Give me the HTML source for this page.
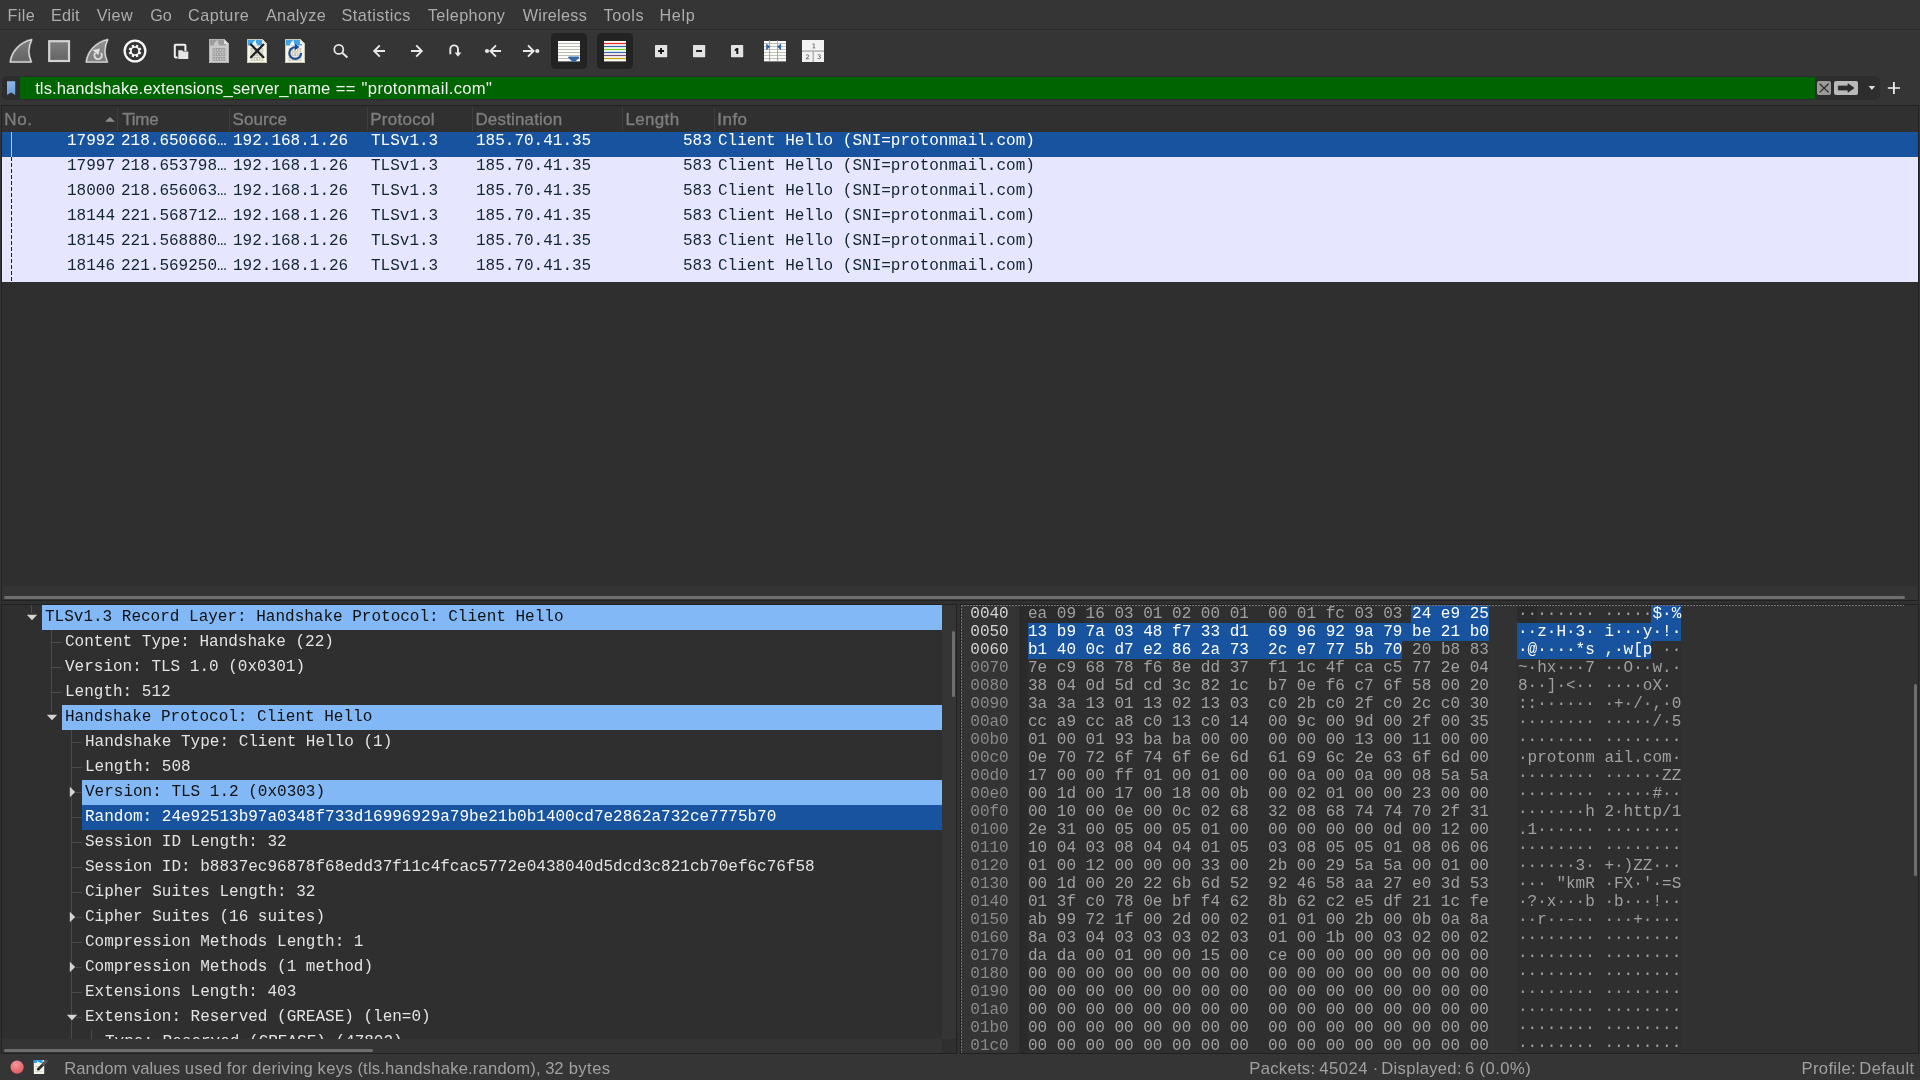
<!DOCTYPE html>
<html>
<head>
<meta charset="utf-8">
<title>Wireshark</title>
<style>
*{box-sizing:border-box;margin:0;padding:0}
html,body{width:1920px;height:1080px;overflow:hidden;background:#353535}
body{position:relative;will-change:transform;font-family:"Liberation Sans",sans-serif;color:#bdbdbd}
.abs{position:absolute}
/* menu */
#menu{position:absolute;left:0;top:0;width:1920px;height:30px;border-bottom:1px solid #2b2b2b}
#menu span{position:absolute;top:5px;font-size:16.2px;line-height:20px;color:#adadad;white-space:nowrap}
/* toolbar */
#tb{position:absolute;left:0;top:31px;width:1920px;height:41px}
#tb svg{position:absolute;overflow:visible}
/* filter */
#fwrap{position:absolute;left:2px;top:76px;width:1878px;height:24px;background:#2d2d2d;border-radius:5px}
#fgreen{position:absolute;left:20px;top:77px;width:1795px;height:22px;background:#006400}
#ftext{position:absolute;left:0;top:79px;width:1px;height:20px}
#ftext span{position:absolute;top:0;font-size:16.6px;line-height:20px;color:#f2f2f2;white-space:nowrap}
/* packet list */
#plist{position:absolute;left:1px;top:105px;width:1918px;height:496px;background:#2f2f2f;border:1px solid #222}
#phead{position:absolute;left:0;top:0;width:1916px;height:26px;background:#303030}
#phead span{position:absolute;top:4px;font-size:17px;line-height:20px;color:#7e7e7e;white-space:nowrap;-webkit-text-stroke:0.35px #7e7e7e}
#phead i{position:absolute;top:1px;width:1px;height:24px;background:#3d3d3d}
.prow{position:absolute;left:0;width:1916px;height:25px;background:#e7e6ff;color:#12272e;font-family:"Liberation Mono",monospace;font-size:16px;line-height:18px;white-space:pre}
.prow.sel{background:#17539f;color:#fff}
.prow span{position:absolute;top:0}
/* panes */
.mono{font-family:"Liberation Mono",monospace;font-size:16px;white-space:pre}
#tree{position:absolute;left:1px;top:604px;width:956px;height:450px;background:#2f2f2f;border:1px solid #222;overflow:hidden}
.tr{position:absolute;left:0;height:25px;width:940px;font-family:"Liberation Mono",monospace;font-size:16px;line-height:18px;color:#e3e3e3;white-space:pre}
.tr b{position:absolute;top:0;right:0;height:25px;font-weight:normal}
.tr span{position:absolute;top:3px}
.tr.l1 b{left:40px}.tr.l1 span{left:43px}
.tr.l2 b{left:60px}.tr.l2 span{left:63px}
.tr.l3 b{left:80px}.tr.l3 span{left:83px}
.tr.l4 b{left:100px}.tr.l4 span{left:103px}
.tr.lt b{background:#82b8f6}.tr.lt span{color:#111}
.tr.sel b{background:#17539f}.tr.sel span{color:#fff}
#treeclip{position:absolute;left:0;top:0;width:940px;height:434px;overflow:hidden}
.tl{position:absolute;background:#4a4a4a}
.ar{position:absolute}
.trk{position:absolute}
.sb{position:absolute;background:#6e6e6e;border-radius:2px}
#hex{position:absolute;left:960px;top:604px;width:959px;height:450px;background:#313131;border:1px solid #222;overflow:hidden}
.band{position:absolute}
.hs{position:absolute;background:#17539f}
#hexrows{position:absolute;left:0;top:0;width:957px;height:447px;overflow:hidden}
.hr{position:absolute;left:0;height:18px;width:957px;font-family:"Liberation Mono",monospace;font-size:16px;line-height:18px;white-space:pre;color:#a0a0a0}
.hr span{position:absolute;top:0}
.hr .off{left:9.3px;color:#8a8a8a}.hr .hx{left:67px}.hr .as{left:557px}
.hr.hl .off{color:#d2d2d2}
.hr em{font-style:normal;color:#fff}
#focus{position:absolute;left:0;top:0;width:943px;height:448px;background:
repeating-linear-gradient(to right,#757575 0,#757575 2px,transparent 2px,transparent 3px) left top/100% 1px no-repeat,
repeating-linear-gradient(to bottom,#757575 0,#757575 2px,transparent 2px,transparent 3px) left top/1px 100% no-repeat}
#status{position:absolute;left:0;top:1054px;width:1920px;height:26px}
#status span{position:absolute;top:5px;font-size:16.6px;line-height:20px;color:#a0a0a0;white-space:nowrap}
</style>
</head>
<body>
<div id="menu">
<span style="left:7.55px;letter-spacing:0.380px">File</span><span style="left:51.05px;letter-spacing:0.147px">Edit</span><span style="left:96.75px;letter-spacing:0.341px">View</span><span style="left:150.21px;letter-spacing:-0.133px">Go</span><span style="left:187.94px;letter-spacing:0.551px">Capture</span><span style="left:265.90px;letter-spacing:0.375px">Analyze</span><span style="left:341.50px;letter-spacing:0.465px">Statistics</span><span style="left:427.77px;letter-spacing:0.423px">Telephony</span><span style="left:522.71px;letter-spacing:0.285px">Wireless</span><span style="left:603.57px;letter-spacing:0.555px">Tools</span><span style="left:659.40px;letter-spacing:0.711px">Help</span>
</div>
<div id="tb">
<!--TOOLBAR-->
</div>
<div id="fwrap"></div>
<div id="fgreen"></div>
<div id="ftext"><span style="left:35.18px;letter-spacing:0.079px">tls.handshake.extensions_server_name</span><span style="left:335.77px;letter-spacing:0.230px">==</span><span style="left:361.62px;letter-spacing:0.340px">"protonmail.com"</span></div>
<svg id="icons" style="position:absolute;left:0;top:0" width="1920" height="104" viewBox="0 0 1920 104">
<defs><linearGradient id="gf" x1="0" y1="0" x2="0" y2="1"><stop offset="0" stop-color="#7e7e7e"/><stop offset="1" stop-color="#646464"/></linearGradient><linearGradient id="gf2" x1="0" y1="0" x2="0" y2="1"><stop offset="0" stop-color="#929292"/><stop offset="1" stop-color="#7c7c7c"/></linearGradient><linearGradient id="gb" x1="0" y1="0" x2="0" y2="1"><stop offset="0" stop-color="#8fb8ea"/><stop offset="1" stop-color="#6c9cd8"/></linearGradient></defs>
<path d="M10.4 61.9C11.5 52 19.5 42.5 31.6 39.7C28.2 46.5 28.2 55 31.2 61.9Z" fill="url(#gf)" stroke="#8a8a8a" stroke-width="2.3" stroke-linejoin="round"/><path d="M10.4 61.9C11.5 52 19.5 42.5 31.6 39.7C28.2 46.5 28.2 55 31.2 61.9Z" fill="none" stroke="#e2e2e2" stroke-width="1.05" stroke-linejoin="round"/>
<rect x="49.2" y="41.2" width="19.8" height="19.8" fill="url(#gf)" stroke="#d2d2d2" stroke-width="2.2"/>
<path d="M86.4 61.9C87.5 52 95.5 42.5 107.6 39.7C104.2 46.5 104.2 55 107.2 61.9Z" fill="url(#gf2)" stroke="#8a8a8a" stroke-width="2.3" stroke-linejoin="round"/><path d="M86.4 61.9C87.5 52 95.5 42.5 107.6 39.7C104.2 46.5 104.2 55 107.2 61.9Z" fill="none" stroke="#e2e2e2" stroke-width="1.05" stroke-linejoin="round"/>
<path d="M100.9 53A3.7 3.7 0 1 1 95.5 52.8" fill="none" stroke="#dedede" stroke-width="1.9"/><path d="M92.6 50L100 48.5L98.3 55Z" fill="#e2e2e2"/>
<circle cx="135" cy="51" r="10.35" fill="none" stroke="#f8f8f8" stroke-width="2.3"/>
<path d="M139.86 51.61 L141.34 52.42 L140.49 54.48 L138.87 54.00 L138.00 54.87 L138.48 56.49 L136.42 57.34 L135.61 55.86 L134.39 55.86 L133.58 57.34 L131.52 56.49 L132.00 54.87 L131.13 54.00 L129.51 54.48 L128.66 52.42 L130.14 51.61 L130.14 50.39 L128.66 49.58 L129.51 47.52 L131.13 48.00 L132.00 47.13 L131.52 45.51 L133.58 44.66 L134.39 46.14 L135.61 46.14 L136.42 44.66 L138.48 45.51 L138.00 47.13 L138.87 48.00 L140.49 47.52 L141.34 49.58 L139.86 50.39Z" fill="#f8f8f8"/><circle cx="135" cy="51" r="3.2" fill="#353535"/>
<rect x="174.8" y="44.8" width="10.6" height="12.6" rx="0.8" fill="none" stroke="#f0f0f0" stroke-width="2"/>
<path d="M178.3 50.3H182.2L183.5 51.6H188.3V59H178.3Z" fill="#e6e6e6" stroke="#353535" stroke-width="1.4" paint-order="stroke"/>
<path d="M209 39H224L229 44V63H209Z" fill="#cbcbcb"/><path d="M209 39H224L226 41V45.5H209Z" fill="#9d9d9d"/><path d="M213.6 45.5Q215 41.2 217.8 39.8Q217.2 43.2 219.8 45.5Z" fill="#cbcbcb"/><path d="M224 39L229 44H224Z" fill="#e4e4e4"/><rect x="213.0" y="48.3" width="2" height="3" fill="none" stroke="#909090" stroke-width="0.7"/><rect x="216.3" y="48.3" width="2" height="3" fill="none" stroke="#909090" stroke-width="0.7"/><rect x="219.6" y="48.3" width="2" height="3" fill="none" stroke="#909090" stroke-width="0.7"/><rect x="222.9" y="48.3" width="2" height="3" fill="none" stroke="#909090" stroke-width="0.7"/><rect x="213.0" y="52.9" width="2" height="3" fill="none" stroke="#909090" stroke-width="0.7"/><rect x="216.3" y="52.9" width="2" height="3" fill="none" stroke="#909090" stroke-width="0.7"/><rect x="219.6" y="52.9" width="2" height="3" fill="none" stroke="#909090" stroke-width="0.7"/><rect x="222.9" y="52.9" width="2" height="3" fill="none" stroke="#909090" stroke-width="0.7"/><rect x="213.0" y="57.5" width="2" height="3" fill="none" stroke="#909090" stroke-width="0.7"/><rect x="216.3" y="57.5" width="2" height="3" fill="none" stroke="#909090" stroke-width="0.7"/><rect x="219.6" y="57.5" width="2" height="3" fill="none" stroke="#909090" stroke-width="0.7"/><rect x="222.9" y="57.5" width="2" height="3" fill="none" stroke="#909090" stroke-width="0.7"/>
<path d="M209.5 39.5H224L228.5 44V62.5H209.5Z" fill="none" stroke="#b4b4b4" stroke-width="1"/>
<path d="M247 39H262L267 44V63H247Z" fill="#f7f7e8"/><path d="M247 39H262L264 41V45.5H247Z" fill="#43a3e6"/><path d="M251.6 45.5Q253 41.2 255.8 39.8Q255.2 43.2 257.8 45.5Z" fill="#f7f7e8"/><path d="M262 39L267 44H262Z" fill="#fdfdf4"/><rect x="251.0" y="48.3" width="2" height="3" fill="none" stroke="#b4b4a4" stroke-width="0.7"/><rect x="254.3" y="48.3" width="2" height="3" fill="none" stroke="#b4b4a4" stroke-width="0.7"/><rect x="257.6" y="48.3" width="2" height="3" fill="none" stroke="#b4b4a4" stroke-width="0.7"/><rect x="260.9" y="48.3" width="2" height="3" fill="none" stroke="#b4b4a4" stroke-width="0.7"/><rect x="251.0" y="52.9" width="2" height="3" fill="none" stroke="#b4b4a4" stroke-width="0.7"/><rect x="254.3" y="52.9" width="2" height="3" fill="none" stroke="#b4b4a4" stroke-width="0.7"/><rect x="257.6" y="52.9" width="2" height="3" fill="none" stroke="#b4b4a4" stroke-width="0.7"/><rect x="260.9" y="52.9" width="2" height="3" fill="none" stroke="#b4b4a4" stroke-width="0.7"/><rect x="251.0" y="57.5" width="2" height="3" fill="none" stroke="#b4b4a4" stroke-width="0.7"/><rect x="254.3" y="57.5" width="2" height="3" fill="none" stroke="#b4b4a4" stroke-width="0.7"/><rect x="257.6" y="57.5" width="2" height="3" fill="none" stroke="#b4b4a4" stroke-width="0.7"/><rect x="260.9" y="57.5" width="2" height="3" fill="none" stroke="#b4b4a4" stroke-width="0.7"/>
<path d="M247.5 39.5H262L266.5 44V62.5H247.5Z" fill="none" stroke="#c8c8b8" stroke-width="1"/>
<path d="M251 44.6L263.4 57.2M263.4 44.6L251 57.2" stroke="#1c2024" stroke-width="2.2" stroke-linecap="round"/>
<path d="M285 39H300L305 44V63H285Z" fill="#f7f7e8"/><path d="M285 39H300L302 41V45.5H285Z" fill="#43a3e6"/><path d="M289.6 45.5Q291 41.2 293.8 39.8Q293.2 43.2 295.8 45.5Z" fill="#f7f7e8"/><path d="M300 39L305 44H300Z" fill="#fdfdf4"/><rect x="289.0" y="48.3" width="2" height="3" fill="none" stroke="#b4b4a4" stroke-width="0.7"/><rect x="292.3" y="48.3" width="2" height="3" fill="none" stroke="#b4b4a4" stroke-width="0.7"/><rect x="295.6" y="48.3" width="2" height="3" fill="none" stroke="#b4b4a4" stroke-width="0.7"/><rect x="298.9" y="48.3" width="2" height="3" fill="none" stroke="#b4b4a4" stroke-width="0.7"/><rect x="289.0" y="52.9" width="2" height="3" fill="none" stroke="#b4b4a4" stroke-width="0.7"/><rect x="292.3" y="52.9" width="2" height="3" fill="none" stroke="#b4b4a4" stroke-width="0.7"/><rect x="295.6" y="52.9" width="2" height="3" fill="none" stroke="#b4b4a4" stroke-width="0.7"/><rect x="298.9" y="52.9" width="2" height="3" fill="none" stroke="#b4b4a4" stroke-width="0.7"/><rect x="289.0" y="57.5" width="2" height="3" fill="none" stroke="#b4b4a4" stroke-width="0.7"/><rect x="292.3" y="57.5" width="2" height="3" fill="none" stroke="#b4b4a4" stroke-width="0.7"/><rect x="295.6" y="57.5" width="2" height="3" fill="none" stroke="#b4b4a4" stroke-width="0.7"/><rect x="298.9" y="57.5" width="2" height="3" fill="none" stroke="#b4b4a4" stroke-width="0.7"/>
<path d="M285.5 39.5H300L304.5 44V62.5H285.5Z" fill="none" stroke="#c8c8b8" stroke-width="1"/>
<path d="M301.1 53.1A5.9 5.9 0 1 1 295.2 47.2" fill="none" stroke="#1b4b9c" stroke-width="2.1"/><path d="M294.8 43.8L299.4 47L294.8 50.2Z" fill="#1b4b9c"/>
<circle cx="338.8" cy="49.4" r="4.5" fill="none" stroke="#e8e8e8" stroke-width="1.7"/><path d="M342.2 52.8L347.4 57.6" stroke="#e8e8e8" stroke-width="2" stroke-linecap="butt"/>
<path d="M385 51H374.6M379.8 45.4L374.2 51L379.8 56.6" fill="none" stroke="#e8e8e8" stroke-width="1.9" stroke-linejoin="miter"/>
<path d="M411 51H421.4M416.2 45.4L421.8 51L416.2 56.6" fill="none" stroke="#e8e8e8" stroke-width="1.9" stroke-linejoin="miter"/>
<path d="M450.3 54.2V49.2A3.85 3.85 0 0 1 458 49.2V53" fill="none" stroke="#e8e8e8" stroke-width="1.9" stroke-linejoin="miter"/>
<path d="M454.6 52.6H461.4L458 56.8Z" fill="#e8e8e8"/>
<circle cx="487" cy="51" r="2.1" fill="#e8e8e8"/><path d="M501 51H491M496 45.4L490.4 51L496 56.6" fill="none" stroke="#e8e8e8" stroke-width="1.9" stroke-linejoin="miter"/>
<path d="M523 51H533M528 45.4L533.6 51L528 56.6" fill="none" stroke="#e8e8e8" stroke-width="1.9" stroke-linejoin="miter"/><circle cx="537.3" cy="51" r="2.1" fill="#e8e8e8"/>
<rect x="551" y="33" width="36" height="36" rx="4.5" fill="#232323"/><rect x="597" y="33" width="36" height="36" rx="4.5" fill="#232323"/>
<rect x="558" y="41" width="22" height="20.4" fill="#fbfbfb"/>
<path d="M558 43.5H580" stroke="#bdbdb0" stroke-width="1"/>
<path d="M558 46.5H580" stroke="#bdbdb0" stroke-width="1"/>
<path d="M558 49.5H580" stroke="#bdbdb0" stroke-width="1"/>
<path d="M558 52.5H580" stroke="#bdbdb0" stroke-width="1"/>
<path d="M558 55.5H580" stroke="#bdbdb0" stroke-width="1"/>
<path d="M558 58.5H580" stroke="#bdbdb0" stroke-width="1"/>
<path d="M569 56.6H578.4Q579.8 56.8 579 58L575.2 61.8Q574 62.8 572.6 61.8L568.4 58Q567.6 56.8 569 56.6Z" fill="#3566a6"/>
<rect x="604" y="41" width="22" height="20.4" fill="#ffffff"/>
<path d="M604 43.5H626" stroke="#ef2929" stroke-width="1.3"/>
<path d="M604 46.5H626" stroke="#3465a4" stroke-width="1.3"/>
<path d="M604 49.5H626" stroke="#73d216" stroke-width="1.3"/>
<path d="M604 52.5H626" stroke="#3465a4" stroke-width="1.3"/>
<path d="M604 55.5H626" stroke="#75507b" stroke-width="1.3"/>
<path d="M604 58.5H626" stroke="#c4a000" stroke-width="1.3"/>
<rect x="655" y="45" width="12.2" height="12.2" rx="0.6" fill="#e3e3e3"/>
<rect x="693" y="45" width="12.2" height="12.2" rx="0.6" fill="#e3e3e3"/>
<rect x="731" y="45" width="12.2" height="12.2" rx="0.6" fill="#e3e3e3"/>
<path d="M658.1 51H664M661.05 48V54" stroke="#151515" stroke-width="1.9"/>
<path d="M696.1 51H702" stroke="#151515" stroke-width="1.9"/>
<path d="M738.3 47.9V54.1H736.3V50.4L734.7 51.2V49.3L736.7 47.9Z" fill="#151515"/>
<rect x="764" y="41" width="22" height="20.4" fill="#fbfbfb"/>
<path d="M764 43.5H786" stroke="#c4c4b8" stroke-width="1"/>
<path d="M764 46.5H786" stroke="#c4c4b8" stroke-width="1"/>
<path d="M764 49.5H786" stroke="#c4c4b8" stroke-width="1"/>
<path d="M764 52.5H786" stroke="#c4c4b8" stroke-width="1"/>
<path d="M764 55.5H786" stroke="#c4c4b8" stroke-width="1"/>
<path d="M764 58.5H786" stroke="#c4c4b8" stroke-width="1"/>
<path d="M769.6 40V62M777.6 40V62" stroke="#9a9a8c" stroke-width="0.9"/>
<path d="M766.2 43.4L770.3 46.8L766.2 50.2Z M781.1 43.4L777 46.8L781.1 50.2Z" fill="#3566a6"/>
<rect x="802" y="40" width="22" height="22" fill="#a4a4a4"/>
<rect x="802" y="40" width="22" height="10.4" fill="#f2f2f2"/><rect x="802" y="51.7" width="10.6" height="10.3" fill="#f2f2f2"/><rect x="813.8" y="51.7" width="10.2" height="10.3" fill="#f2f2f2"/>
<path d="M812.6 44.5L814 43.6V47.9M812.6 47.9H815.2 M805.9 55.5Q807.4 54 808.7 55.3Q809.2 56.7 805.9 58.8H809.3 M817.7 55.1Q819.4 54 820.5 55.3Q820.5 56.5 819 56.6Q821 56.9 820.7 58Q819.4 59.3 817.5 58.3" fill="none" stroke="#606060" stroke-width="0.8"/>
<path d="M7 81.2H15.2V95L11.1 92.6L7 95Z" fill="url(#gb)"/>
<rect x="1817" y="81" width="14" height="14" rx="2" fill="#9a9a9a"/><path d="M1819.6 83.8L1828.6 92.4M1828.6 83.8L1819.6 92.4" stroke="#2c2c2c" stroke-width="1.3"/>
<rect x="1834" y="81" width="24" height="14" rx="2" fill="#b9b9b9"/><path d="M1838.3 86H1848V83.8L1854 88L1848 92.2V90H1838.3Z" fill="#2c2c2c" stroke="#2c2c2c" stroke-width="0.8" stroke-linejoin="round"/>
<path d="M1868.6 86H1875.2L1871.9 89.9Z" fill="#dcdcdc"/>
<path d="M1887.8 88H1900M1893.9 82V94" stroke="#f2f2f2" stroke-width="1.7"/>
</svg>
<div style="position:absolute;left:0;top:601px;width:1920px;height:453px;background:#303030"></div>
<div id="plist">
<div class="trk" style="left:0;top:480px;width:1916px;height:14px;background:#343434"></div>
<div id="phead">
<span style="left:2.24px;letter-spacing:0.632px">No.</span><svg style="position:absolute;left:102px;top:10px" width="12" height="7" viewBox="0 0 12 7"><path d="M1 5.7L6 0.9L11 5.7Z" fill="#8c8c8c"/></svg><i style="left:115px"></i>
<span style="left:120.35px;letter-spacing:-0.253px">Time</span><i style="left:227px"></i>
<span style="left:230.60px;letter-spacing:0.086px">Source</span><i style="left:365px"></i>
<span style="left:368.24px;letter-spacing:0.265px">Protocol</span><i style="left:470px"></i>
<span style="left:473.44px;letter-spacing:0.160px">Destination</span><i style="left:620px"></i>
<span style="left:623.44px;letter-spacing:0.339px">Length</span><i style="left:712px"></i>
<span style="left:715.30px;letter-spacing:0.459px">Info</span>
</div>
<div class="prow sel" style="top:26px"><span style="left:65px">17992</span><span style="left:119px">218.650666…</span><span style="left:231px">192.168.1.26</span><span style="left:369px">TLSv1.3</span><span style="left:474px">185.70.41.35</span><span style="left:681px">583</span><span style="left:716px">Client Hello (SNI=protonmail.com)</span></div>
<div class="prow" style="top:51px"><span style="left:65px">17997</span><span style="left:119px">218.653798…</span><span style="left:231px">192.168.1.26</span><span style="left:369px">TLSv1.3</span><span style="left:474px">185.70.41.35</span><span style="left:681px">583</span><span style="left:716px">Client Hello (SNI=protonmail.com)</span></div>
<div class="prow" style="top:76px"><span style="left:65px">18000</span><span style="left:119px">218.656063…</span><span style="left:231px">192.168.1.26</span><span style="left:369px">TLSv1.3</span><span style="left:474px">185.70.41.35</span><span style="left:681px">583</span><span style="left:716px">Client Hello (SNI=protonmail.com)</span></div>
<div class="prow" style="top:101px"><span style="left:65px">18144</span><span style="left:119px">221.568712…</span><span style="left:231px">192.168.1.26</span><span style="left:369px">TLSv1.3</span><span style="left:474px">185.70.41.35</span><span style="left:681px">583</span><span style="left:716px">Client Hello (SNI=protonmail.com)</span></div>
<div class="prow" style="top:126px"><span style="left:65px">18145</span><span style="left:119px">221.568880…</span><span style="left:231px">192.168.1.26</span><span style="left:369px">TLSv1.3</span><span style="left:474px">185.70.41.35</span><span style="left:681px">583</span><span style="left:716px">Client Hello (SNI=protonmail.com)</span></div>
<div class="prow" style="top:151px"><span style="left:65px">18146</span><span style="left:119px">221.569250…</span><span style="left:231px">192.168.1.26</span><span style="left:369px">TLSv1.3</span><span style="left:474px">185.70.41.35</span><span style="left:681px">583</span><span style="left:716px">Client Hello (SNI=protonmail.com)</span></div>
<div style="position:absolute;left:9px;top:26px;width:1px;height:25px;background:#c9c8b4"></div>
<div style="position:absolute;left:9px;top:51px;width:1px;height:125px;background:repeating-linear-gradient(to bottom,#1a1f24 0,#1a1f24 4px,transparent 4px,transparent 6px)"></div>
</div>
<div id="tree"><div id="treeclip">
<div class="tl" style="left:29px;top:-1px;width:1px;height:9px"></div>
<div class="tl" style="left:49px;top:25px;width:1px;height:82px"></div>
<div class="tl" style="left:69px;top:125px;width:1px;height:310px"></div>
<div class="tl" style="left:89px;top:425px;width:1px;height:10px"></div>
<div class="tr l1 lt" style="top:0px"><b></b><span>TLSv1.3 Record Layer: Handshake Protocol: Client Hello</span></div>
<svg class="ar" style="left:24px;top:9px" width="12" height="7" viewBox="0 0 12 7"><path d="M0.8 0.8H11.2L6 6.2Z" fill="#d4d4d4"/></svg>
<div class="tl" style="left:49px;top:37px;width:11px;height:1px"></div>
<div class="tr l2 " style="top:25px"><span>Content Type: Handshake (22)</span></div>
<div class="tl" style="left:49px;top:62px;width:11px;height:1px"></div>
<div class="tr l2 " style="top:50px"><span>Version: TLS 1.0 (0x0301)</span></div>
<div class="tl" style="left:49px;top:87px;width:11px;height:1px"></div>
<div class="tr l2 " style="top:75px"><span>Length: 512</span></div>
<div class="tr l2 lt" style="top:100px"><b></b><span>Handshake Protocol: Client Hello</span></div>
<svg class="ar" style="left:44px;top:109px" width="12" height="7" viewBox="0 0 12 7"><path d="M0.8 0.8H11.2L6 6.2Z" fill="#d4d4d4"/></svg>
<div class="tl" style="left:69px;top:137px;width:11px;height:1px"></div>
<div class="tr l3 " style="top:125px"><span>Handshake Type: Client Hello (1)</span></div>
<div class="tl" style="left:69px;top:162px;width:11px;height:1px"></div>
<div class="tr l3 " style="top:150px"><span>Length: 508</span></div>
<div class="tl" style="left:74px;top:187px;width:6px;height:1px"></div>
<div class="tr l3 lt" style="top:175px"><b></b><span>Version: TLS 1.2 (0x0303)</span></div>
<svg class="ar" style="left:67px;top:181px" width="7" height="12" viewBox="0 0 7 12"><path d="M0.8 0.8V11.2L6.2 6Z" fill="#d4d4d4"/></svg>
<div class="tl" style="left:69px;top:212px;width:11px;height:1px"></div>
<div class="tr l3 sel" style="top:200px"><b></b><span>Random: 24e92513b97a0348f733d16996929a79be21b0b1400cd7e2862a732ce7775b70</span></div>
<div class="tl" style="left:69px;top:237px;width:11px;height:1px"></div>
<div class="tr l3 " style="top:225px"><span>Session ID Length: 32</span></div>
<div class="tl" style="left:69px;top:262px;width:11px;height:1px"></div>
<div class="tr l3 " style="top:250px"><span>Session ID: b8837ec96878f68edd37f11c4fcac5772e0438040d5dcd3c821cb70ef6c76f58</span></div>
<div class="tl" style="left:69px;top:287px;width:11px;height:1px"></div>
<div class="tr l3 " style="top:275px"><span>Cipher Suites Length: 32</span></div>
<div class="tl" style="left:74px;top:312px;width:6px;height:1px"></div>
<div class="tr l3 " style="top:300px"><span>Cipher Suites (16 suites)</span></div>
<svg class="ar" style="left:67px;top:306px" width="7" height="12" viewBox="0 0 7 12"><path d="M0.8 0.8V11.2L6.2 6Z" fill="#d4d4d4"/></svg>
<div class="tl" style="left:69px;top:337px;width:11px;height:1px"></div>
<div class="tr l3 " style="top:325px"><span>Compression Methods Length: 1</span></div>
<div class="tl" style="left:74px;top:362px;width:6px;height:1px"></div>
<div class="tr l3 " style="top:350px"><span>Compression Methods (1 method)</span></div>
<svg class="ar" style="left:67px;top:356px" width="7" height="12" viewBox="0 0 7 12"><path d="M0.8 0.8V11.2L6.2 6Z" fill="#d4d4d4"/></svg>
<div class="tl" style="left:69px;top:387px;width:11px;height:1px"></div>
<div class="tr l3 " style="top:375px"><span>Extensions Length: 403</span></div>
<div class="tl" style="left:74px;top:412px;width:6px;height:1px"></div>
<div class="tr l3 " style="top:400px"><span>Extension: Reserved (GREASE) (len=0)</span></div>
<svg class="ar" style="left:64px;top:409px" width="12" height="7" viewBox="0 0 12 7"><path d="M0.8 0.8H11.2L6 6.2Z" fill="#d4d4d4"/></svg>
<div class="tl" style="left:89px;top:437px;width:11px;height:1px"></div>
<div class="tr l4 " style="top:425px"><span>Type: Reserved (GREASE) (47802)</span></div>
</div>
<div class="trk" style="left:940px;top:0;width:14px;height:434px;background:#353535"></div><div class="trk" style="left:0;top:434px;width:940px;height:14px;background:#343434"></div><div class="trk" style="left:940px;top:434px;width:14px;height:14px;background:#2f2f2f"></div><div class="sb" style="left:950px;top:26px;width:3px;height:66px"></div>
<div class="sb" style="left:2px;top:444px;width:369px;height:3px"></div>
</div>
<div id="hex">
<div class="band" style="left:0;top:0;width:58px;height:448px;background:#343434"></div>
<div class="band" style="left:58px;top:0;width:9px;height:448px;background:#2b2b2b"></div>
<div class="band" style="left:67px;top:0;width:461px;height:448px;background:#2f2f2f"></div>
<div class="band" style="left:528px;top:0;width:28px;height:448px;background:#323232"></div>
<div class="band" style="left:556px;top:0;width:164px;height:448px;background:#2f2f2f"></div>
<div class="band" style="left:720px;top:0;width:1237px;height:448px;background:#313131"></div>
<div class="band" style="left:67px;top:0;width:57px;height:18px;background:#2b2b2b"></div><div class="band" style="left:556px;top:0;width:20px;height:18px;background:#2b2b2b"></div><div class="hs" style="left:450px;top:0;width:78px;height:18px"></div>
<div class="hs" style="left:67px;top:18px;width:461px;height:18px"></div>
<div class="hs" style="left:67px;top:36px;width:374px;height:18px"></div>
<div class="hs" style="left:690px;top:0;width:30px;height:18px"></div>
<div class="hs" style="left:556px;top:18px;width:164px;height:18px"></div>
<div class="hs" style="left:556px;top:36px;width:134px;height:18px"></div>
<div id="hexrows">
<div class="hr hl" style="top:0px"><span class="off">0040</span><span class="hx">ea 09 16 03 01 02 00 01  00 01 fc 03 03 <em>24 e9 25</em></span><span class="as">········ ·····<em>$·%</em></span></div>
<div class="hr hl" style="top:18px"><span class="off">0050</span><span class="hx"><em>13 b9 7a 03 48 f7 33 d1  69 96 92 9a 79 be 21 b0</em></span><span class="as"><em>··z·H·3· i···y·!·</em></span></div>
<div class="hr hl" style="top:36px"><span class="off">0060</span><span class="hx"><em>b1 40 0c d7 e2 86 2a 73  2c e7 77 5b 70</em> 20 b8 83</span><span class="as"><em>·@····*s ,·w[p</em> ··</span></div>
<div class="hr " style="top:54px"><span class="off">0070</span><span class="hx">7e c9 68 78 f6 8e dd 37  f1 1c 4f ca c5 77 2e 04</span><span class="as">~·hx···7 ··O··w.·</span></div>
<div class="hr " style="top:72px"><span class="off">0080</span><span class="hx">38 04 0d 5d cd 3c 82 1c  b7 0e f6 c7 6f 58 00 20</span><span class="as">8··]·&lt;·· ····oX· </span></div>
<div class="hr " style="top:90px"><span class="off">0090</span><span class="hx">3a 3a 13 01 13 02 13 03  c0 2b c0 2f c0 2c c0 30</span><span class="as">::······ ·+·/·,·0</span></div>
<div class="hr " style="top:108px"><span class="off">00a0</span><span class="hx">cc a9 cc a8 c0 13 c0 14  00 9c 00 9d 00 2f 00 35</span><span class="as">········ ·····/·5</span></div>
<div class="hr " style="top:126px"><span class="off">00b0</span><span class="hx">01 00 01 93 ba ba 00 00  00 00 00 13 00 11 00 00</span><span class="as">········ ········</span></div>
<div class="hr " style="top:144px"><span class="off">00c0</span><span class="hx">0e 70 72 6f 74 6f 6e 6d  61 69 6c 2e 63 6f 6d 00</span><span class="as">·protonm ail.com·</span></div>
<div class="hr " style="top:162px"><span class="off">00d0</span><span class="hx">17 00 00 ff 01 00 01 00  00 0a 00 0a 00 08 5a 5a</span><span class="as">········ ······ZZ</span></div>
<div class="hr " style="top:180px"><span class="off">00e0</span><span class="hx">00 1d 00 17 00 18 00 0b  00 02 01 00 00 23 00 00</span><span class="as">········ ·····#··</span></div>
<div class="hr " style="top:198px"><span class="off">00f0</span><span class="hx">00 10 00 0e 00 0c 02 68  32 08 68 74 74 70 2f 31</span><span class="as">·······h 2·http/1</span></div>
<div class="hr " style="top:216px"><span class="off">0100</span><span class="hx">2e 31 00 05 00 05 01 00  00 00 00 00 0d 00 12 00</span><span class="as">.1······ ········</span></div>
<div class="hr " style="top:234px"><span class="off">0110</span><span class="hx">10 04 03 08 04 04 01 05  03 08 05 05 01 08 06 06</span><span class="as">········ ········</span></div>
<div class="hr " style="top:252px"><span class="off">0120</span><span class="hx">01 00 12 00 00 00 33 00  2b 00 29 5a 5a 00 01 00</span><span class="as">······3· +·)ZZ···</span></div>
<div class="hr " style="top:270px"><span class="off">0130</span><span class="hx">00 1d 00 20 22 6b 6d 52  92 46 58 aa 27 e0 3d 53</span><span class="as">··· "kmR ·FX·'·=S</span></div>
<div class="hr " style="top:288px"><span class="off">0140</span><span class="hx">01 3f c0 78 0e bf f4 62  8b 62 c2 e5 df 21 1c fe</span><span class="as">·?·x···b ·b···!··</span></div>
<div class="hr " style="top:306px"><span class="off">0150</span><span class="hx">ab 99 72 1f 00 2d 00 02  01 01 00 2b 00 0b 0a 8a</span><span class="as">··r··-·· ···+····</span></div>
<div class="hr " style="top:324px"><span class="off">0160</span><span class="hx">8a 03 04 03 03 03 02 03  01 00 1b 00 03 02 00 02</span><span class="as">········ ········</span></div>
<div class="hr " style="top:342px"><span class="off">0170</span><span class="hx">da da 00 01 00 00 15 00  ce 00 00 00 00 00 00 00</span><span class="as">········ ········</span></div>
<div class="hr " style="top:360px"><span class="off">0180</span><span class="hx">00 00 00 00 00 00 00 00  00 00 00 00 00 00 00 00</span><span class="as">········ ········</span></div>
<div class="hr " style="top:378px"><span class="off">0190</span><span class="hx">00 00 00 00 00 00 00 00  00 00 00 00 00 00 00 00</span><span class="as">········ ········</span></div>
<div class="hr " style="top:396px"><span class="off">01a0</span><span class="hx">00 00 00 00 00 00 00 00  00 00 00 00 00 00 00 00</span><span class="as">········ ········</span></div>
<div class="hr " style="top:414px"><span class="off">01b0</span><span class="hx">00 00 00 00 00 00 00 00  00 00 00 00 00 00 00 00</span><span class="as">········ ········</span></div>
<div class="hr " style="top:432px"><span class="off">01c0</span><span class="hx">00 00 00 00 00 00 00 00  00 00 00 00 00 00 00 00</span><span class="as">········ ········</span></div>
</div>
<div id="focus"></div>
<div class="sb" style="left:953px;top:79px;width:3px;height:192px"></div>
</div>
<div class="sb" style="left:4px;top:596px;width:1901px;height:3px"></div>
<div id="status">
<svg style="position:absolute;left:10px;top:6px" width="15" height="15" viewBox="0 0 15 15"><defs><radialGradient id="rg" cx="0.4" cy="0.3" r="0.75"><stop offset="0" stop-color="#f09a9c"/><stop offset="1" stop-color="#e6555a"/></radialGradient></defs><circle cx="7.1" cy="7.1" r="6.6" fill="url(#rg)"/></svg>
<svg style="position:absolute;left:32px;top:4px;overflow:visible" width="16" height="18" viewBox="0 0 16 18"><rect x="1.8" y="2" width="10.4" height="14" fill="#f4f4ea"/><rect x="1.8" y="2" width="8.8" height="3" fill="#2f9ee0"/><path d="M4.6 5L5.6 2.6L6.2 4L8 4.4L8.6 5Z" fill="#e8f2f8"/><path d="M3.5 8.5H7M3.5 11H6M3.5 13.6H10.5" stroke="#c8c8c0" stroke-width="0.8"/><path d="M6.6 10.9L14 3.4" stroke="#343432" stroke-width="2.8" stroke-linecap="round"/><path d="M11.6 5.8L14.2 3.2" stroke="#5c5c5a" stroke-width="2.8" stroke-linecap="round"/><path d="M5 12.6L5.9 9.9L7.8 11.7Z" fill="#0c0c0c"/></svg>
<span style="left:64.27px;letter-spacing:0.055px">Random</span><span style="left:132.08px;letter-spacing:-0.022px">values</span><span style="left:184.80px;letter-spacing:0.370px">used</span><span style="left:226.79px;letter-spacing:0.456px">for</span><span style="left:252.37px;letter-spacing:0.334px">deriving</span><span style="left:317.60px;letter-spacing:0.258px">keys</span><span style="left:357.40px;letter-spacing:0.196px">(tls.handshake.random),</span><span style="left:545.15px;letter-spacing:-0.215px">32</span><span style="left:568.70px;letter-spacing:0.450px">bytes</span><span style="left:1249.37px;letter-spacing:0.290px">Packets:</span><span style="left:1319.15px;letter-spacing:0.569px">45024</span><span style="left:1372.70px;letter-spacing:0.000px">·</span><span style="left:1381.27px;letter-spacing:0.307px">Displayed:</span><span style="left:1464.99px;letter-spacing:0.000px">6</span><span style="left:1479.60px;letter-spacing:0.469px">(0.0%)</span><span style="left:1801.52px;letter-spacing:0.355px">Profile:</span><span style="left:1859.37px;letter-spacing:0.354px">Default</span>
</div>
</body>
</html>
